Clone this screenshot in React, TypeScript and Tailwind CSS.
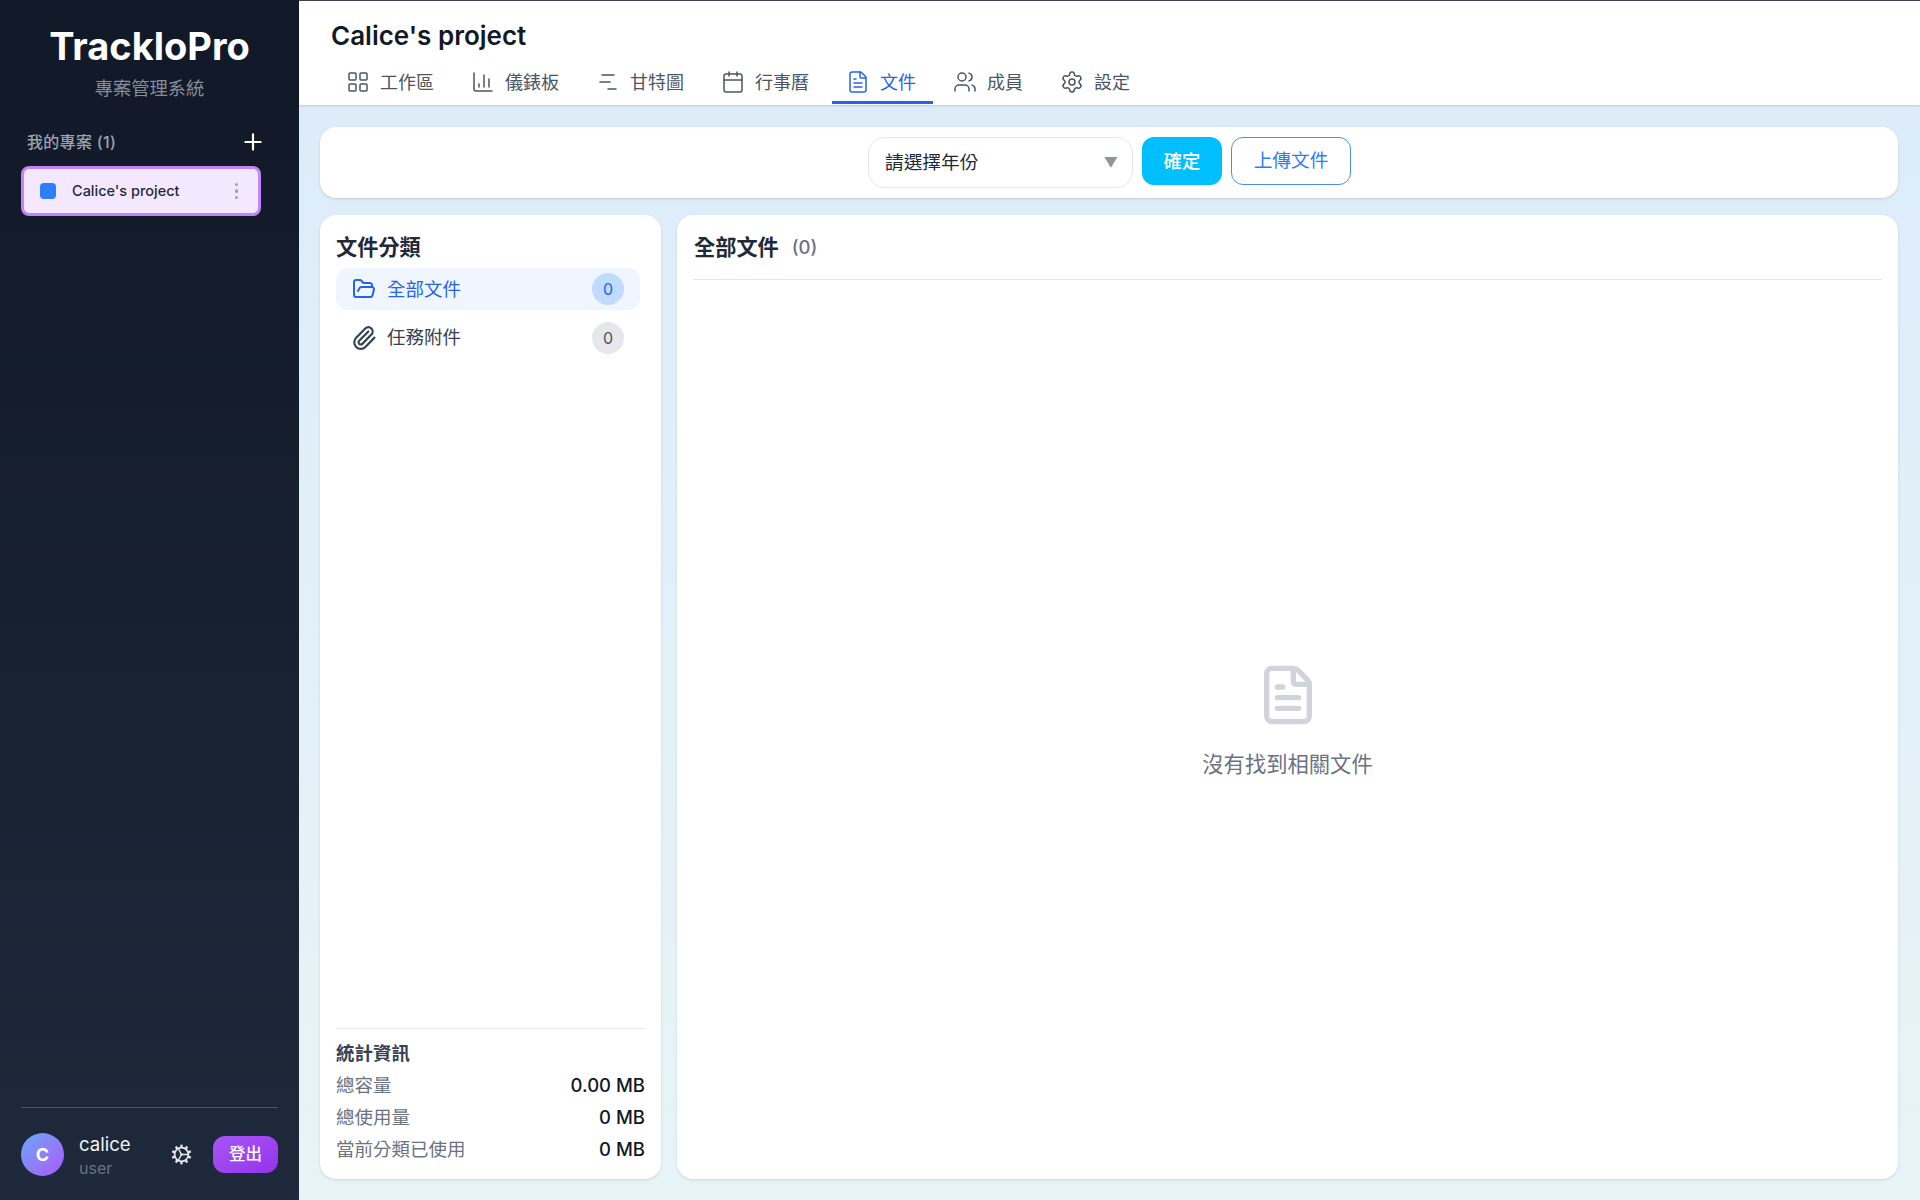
import { ChartColumn, ChartNoAxesGantt, Calendar, FileText, FolderOpen, LayoutGrid, Paperclip, Plus, Settings, Users } from "lucide-react";

const tabs = [
  { label: "工作區", Icon: LayoutGrid },
  { label: "儀錶板", Icon: ChartColumn },
  { label: "甘特圖", Icon: ChartNoAxesGantt },
  { label: "行事曆", Icon: Calendar },
  { label: "文件", Icon: FileText, active: true },
  { label: "成員", Icon: Users },
  { label: "設定", Icon: Settings },
];

function Gear() {
  const teeth = Array.from({ length: 10 }, (_, i) => (i * 360) / 10);
  return (
    <svg width="23" height="23" viewBox="0 0 22 22" fill="none" stroke="#e5e7eb" strokeWidth="1.7">
      <circle cx="11" cy="11" r="6.6" />
      {teeth.map((a) => (
        <line key={a} x1="11" y1="4.6" x2="11" y2="1.6" strokeWidth="2.2" transform={`rotate(${a} 11 11)`} />
      ))}
      <path d="M8 5.5 L11 11 L8 16.5 M11 11 H17.5" strokeWidth="1.4" />
      <circle cx="11" cy="11" r="1.3" fill="#e5e7eb" stroke="none" />
    </svg>
  );
}

function Stat({ label, value }: { label: string; value: string }) {
  return (
    <div className="flex h-8 items-center justify-between text-[18.5px]">
      <span className="text-[#6b7280]">{label}</span>
      <span className="font-medium text-[#111827]">{value}</span>
    </div>
  );
}

export default function App() {
  return (
    <div className="flex h-screen w-full overflow-hidden font-['Inter','Noto_Sans_CJK_TC',sans-serif]">
      <aside className="flex w-[299px] shrink-0 flex-col bg-linear-to-b from-[#111827] to-[#1e293b] px-[21px]">
        <div className="pt-[21px] text-center">
          <div className="text-[38px] leading-[50px] font-bold text-white">TrackloPro</div>
          <div className="mt-[4px] text-[18.3px] leading-[26px] text-[#858c99]">專案管理系統</div>
        </div>
        <div className="mt-[25px] flex h-[32px] items-center justify-between pr-[12px] pl-[6px]">
          <span className="text-[16px] font-medium tracking-[0.3px] text-[#9ca3af]">我的專案 (1)</span>
          <Plus size={26} strokeWidth={2} className="text-white" />
        </div>
        <div className="mt-[8px] flex h-[50px] w-[240px] items-center rounded-lg border-[3px] border-[#c084fc] bg-[#f3e8ff] pr-[20px] pl-[16px]">
          <span className="h-4 w-4 rounded-[4px] bg-[#2d7ff9]" />
          <span className="ml-4 flex-1 text-[14.5px] font-medium text-[#1f2937]">Calice's project</span>
          <span className="flex flex-col gap-[3px]">
            <span className="h-[3.5px] w-[3.5px] rounded-full bg-[#9ca3af]" />
            <span className="h-[3.5px] w-[3.5px] rounded-full bg-[#9ca3af]" />
            <span className="h-[3.5px] w-[3.5px] rounded-full bg-[#9ca3af]" />
          </span>
        </div>
        <div className="mt-auto mb-[21px] border-t border-[#4b5563] pt-[21px]">
          <div className="flex items-center">
            <div className="flex h-[43px] w-[43px] items-center justify-center rounded-full bg-linear-to-br from-[#60a5fa] to-[#a855f7] text-[18px] font-bold text-white">C</div>
            <div className="ml-[15px] flex flex-1 flex-col pt-[2px]">
              <span className="text-[18.6px] leading-[26px] text-[#f3f4f6]">calice</span>
              <span className="text-[16px] leading-[22px] text-[#6b7280]">user</span>
            </div>
            <span className="mr-[20px]"><Gear /></span>
            <button className="h-[37px] w-[65px] rounded-xl bg-linear-to-br from-[#a855f7] to-[#9333ea] text-[16.5px] font-medium text-white">登出</button>
          </div>
        </div>
      </aside>
      <main className="flex min-w-0 flex-1 flex-col bg-linear-to-b from-[#dcebfa] to-[#e7f4f6]">
        <header className="h-[105px] shrink-0 border-t border-[#374151] bg-white pl-[32px] shadow-[0_1px_2px_rgba(0,0,0,0.15)]">
          <h1 className="pt-[18px] text-[26px] leading-[34px] font-semibold text-[#111827]">Calice's project</h1>
          <nav className="mt-[8px] ml-[1px] flex gap-[6px]">
            {tabs.map(({ label, Icon, active }) => (
              <div
                key={label}
                className={`flex h-[43px] items-center gap-[10px] border-b-[3px] pt-[2px] pr-[17px] pl-[14px] text-[18px] ${active ? "border-[#2563eb] text-[#2563eb]" : "border-transparent text-[#4b5563]"}`}
              >
                <Icon size={24} strokeWidth={1.5} />
                <span>{label}</span>
              </div>
            ))}
          </nav>
        </header>
        <div className="flex min-h-0 flex-1 flex-col gap-[17px] pt-[22px] pr-[22px] pb-[21px] pl-[21px]">
          <div className="flex h-[71px] shrink-0 items-start justify-center gap-[9px] rounded-2xl bg-white pt-[10px] shadow-sm">
            <div className="ml-[1px] flex h-[51px] w-[265px] items-center justify-between rounded-2xl border border-[#e5e7eb] pr-[14px] pl-[16px] text-[18.7px] text-[#1f2937]">
              <span className="pt-[1px]">請選擇年份</span>
              <span className="text-[14px] text-[#8f949c]">▼</span>
            </div>
            <button className="h-[48px] w-[80px] rounded-xl bg-[#00bfff] pt-[1px] text-[18.4px] font-medium text-white">確定</button>
            <button className="h-[48px] w-[120px] rounded-xl border-[1.5px] border-[#4a8bf8] bg-white pt-[1px] text-[18.7px] text-[#2f7cf6]">上傳文件</button>
          </div>
          <div className="flex min-h-0 flex-1 gap-[16px]">
            <section className="flex w-[341px] shrink-0 flex-col rounded-2xl bg-white px-[16px] shadow-sm">
              <h2 className="pt-[18px] text-[21.2px] leading-[28px] font-semibold text-[#1f2937]">文件分類</h2>
              <div className="mt-[7px] flex h-[42px] w-[304px] items-center rounded-xl bg-[#eff6ff] pr-[16px] pl-[16px] text-[#2563eb]">
                <FolderOpen size={24} strokeWidth={2} />
                <span className="ml-[11px] flex-1 pt-[1px] text-[18.5px]">全部文件</span>
                <span className="flex h-[32px] w-[32px] items-center justify-center rounded-full bg-[#bfdbfe] text-[16px]">0</span>
              </div>
              <div className="mt-[7px] flex h-[42px] w-[304px] items-center pr-[16px] pl-[15px] text-[#374151]">
                <Paperclip size={26} strokeWidth={2} />
                <span className="ml-[10px] flex-1 text-[18.5px]">任務附件</span>
                <span className="flex h-[32px] w-[32px] items-center justify-center rounded-full bg-[#e5e7eb] text-[16px] text-[#4b5563]">0</span>
              </div>
              <div className="mt-auto mb-[13px] border-t border-[#e5e7eb] pt-[9px]">
                <div className="flex h-[32px] items-center text-[18.5px] font-semibold text-[#374151]">統計資訊</div>
                <Stat label="總容量" value="0.00 MB" />
                <Stat label="總使用量" value="0 MB" />
                <Stat label="當前分類已使用" value="0 MB" />
              </div>
            </section>
            <section className="flex min-w-0 flex-1 flex-col rounded-2xl bg-white px-[16px] shadow-sm">
              <div className="flex h-[65px] shrink-0 items-center gap-[13px] border-b border-[#e5e7eb] pt-[1px] pl-[1px]">
                <h2 className="text-[21.2px] font-semibold text-[#1f2937]">全部文件</h2>
                <span className="pt-[1px] text-[18.5px] font-medium text-[#6b7280]">(0)</span>
              </div>
              <div className="flex flex-1 flex-col items-center justify-center pb-[15px]">
                <FileText size={64} strokeWidth={2} className="text-[#d1d5db]" />
                <p className="mt-[22px] text-[21.3px] text-[#6b7280]">沒有找到相關文件</p>
              </div>
            </section>
          </div>
        </div>
      </main>
    </div>
  );
}
